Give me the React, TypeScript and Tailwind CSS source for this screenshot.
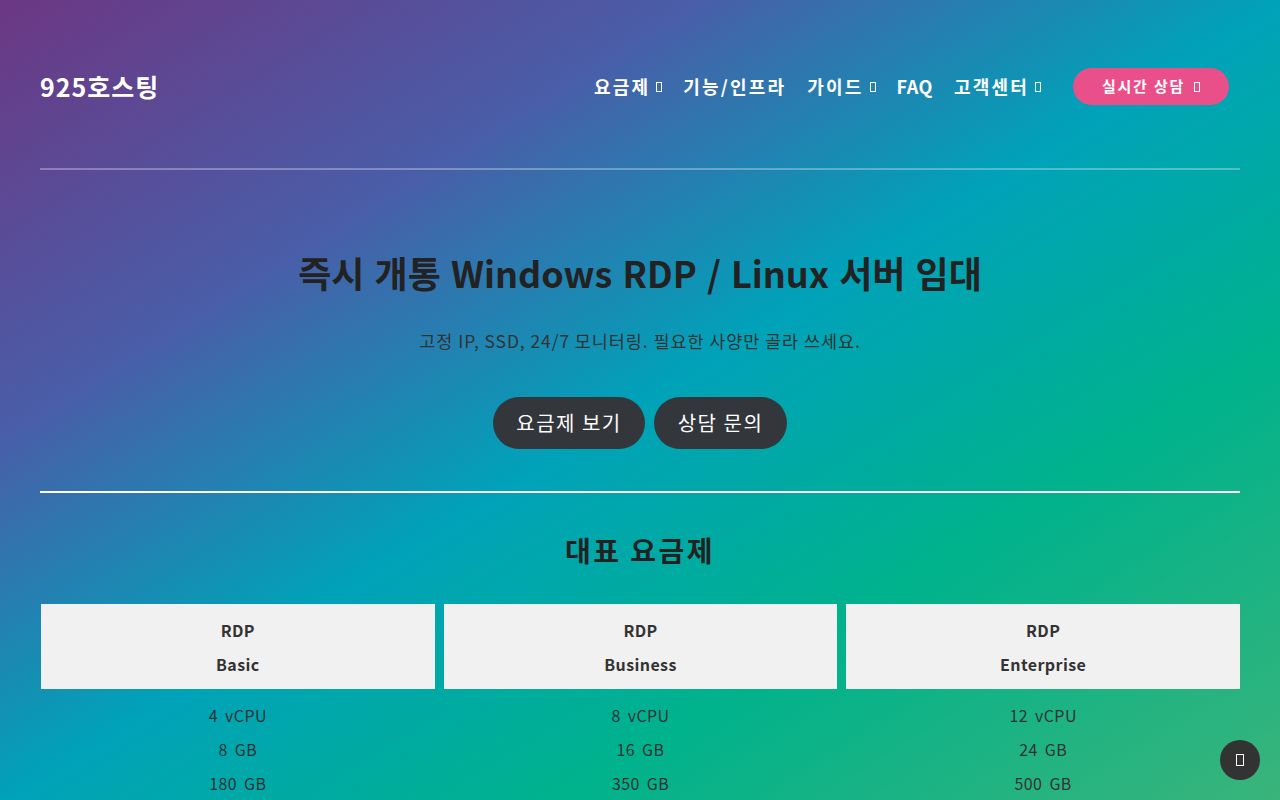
import React from "react";

const Tofu = ({ className = "" }: { className?: string }) => (
  <span className={"inline-block border border-current align-middle " + className} />
);

const plans = [
  { name: "Basic", cpu: "4 vCPU", ram: "8 GB", disk: "180 GB" },
  { name: "Business", cpu: "8 vCPU", ram: "16 GB", disk: "350 GB" },
  { name: "Enterprise", cpu: "12 vCPU", ram: "24 GB", disk: "500 GB" },
];

export default function App() {
  return (
    <div
      className="min-h-screen bg-fixed bg-[linear-gradient(to_bottom_right,#6c3783_0%,#4a5da8_27%,#00a2b9_50%,#00b28c_72%,#3ab47a_100%)] text-[#222]"
      style={{ fontFamily: '"Noto Sans CJK KR", "Noto Sans", sans-serif' }}
    >
      <div className="px-10">
        <header className="pt-[68px] pb-[63px] border-b-2 border-white/30">
          <div className="flex h-[37px] items-center justify-between">
            <div className="text-[25px] font-bold text-white leading-none tracking-[1px]">925호스팅</div>
            <nav className="mr-[11px] flex items-center text-[18px] font-bold text-white tracking-[2.2px]">
              <a className="flex items-center gap-[6px]">
                요금제 <Tofu className="w-[6px] h-[10px]" />
              </a>
              <a className="ml-[21px]">기능/인프라</a>
              <a className="ml-[21px] flex items-center gap-[6px]">
                가이드 <Tofu className="w-[6px] h-[10px]" />
              </a>
              <a className="ml-[21px] tracking-[0.5px]">FAQ</a>
              <a className="ml-[21px] flex items-center gap-[6px]">
                고객센터 <Tofu className="w-[6px] h-[10px]" />
              </a>
              <button className="ml-[32px] flex h-[37px] w-[156px] items-center justify-center gap-[9px] rounded-full bg-[#e9508a] text-[15px] font-bold text-white tracking-[1.8px]">
                실시간 상담 <Tofu className="w-[6px] h-[10px]" />
              </button>
            </nav>
          </div>
        </header>

        <section className="flex flex-col items-center border-b-2 border-white pb-[42px]">
          <h1 className="mt-[78px] text-[36px] font-bold leading-[48px] text-[#222] tracking-[0px] [word-spacing:2px]">
            즉시 개통 Windows RDP / Linux 서버 임대
          </h1>
          <p className="mt-[33px] text-[17.5px] leading-[24px] text-[#333] tracking-[0.9px]">
            고정 IP, SSD, 24/7 모니터링. 필요한 사양만 골라 쓰세요.
          </p>
          <div className="mt-[44px] flex gap-[9px]">
            <button className="h-[52px] w-[152px] rounded-full bg-[#33373b] text-[20px] text-white tracking-[1.5px]">
              요금제 보기
            </button>
            <button className="h-[52px] w-[133px] rounded-full bg-[#33373b] text-[20px] text-white tracking-[1.5px]">
              상담 문의
            </button>
          </div>
        </section>

        <section className="pb-10">
          <h2 className="mt-[37px] text-center text-[28px] font-bold leading-[40px] text-[#222] tracking-[2.5px]">
            대표 요금제
          </h2>
          <div className="mt-[34px] grid grid-cols-3 gap-[9px] pl-px">
            {plans.map((p) => (
              <div key={p.name} className="text-center">
                <div className="bg-[#f1f1f1] pt-[9px] pb-[8px] text-[16px] font-bold leading-[34px] text-[#333] tracking-[0.4px]">
                  <div>RDP</div>
                  <div>{p.name}</div>
                </div>
                <div className="mt-[9px] text-[16px] leading-[34px] text-[#333] tracking-[0.4px] [word-spacing:3px]">
                  <div>{p.cpu}</div>
                  <div>{p.ram}</div>
                  <div>{p.disk}</div>
                </div>
              </div>
            ))}
          </div>
        </section>
      </div>

      <button className="fixed right-[20px] bottom-[20px] flex h-[40px] w-[40px] items-center justify-center rounded-full bg-[#333] text-white">
        <Tofu className="w-[8px] h-[12px]" />
      </button>
    </div>
  );
}
